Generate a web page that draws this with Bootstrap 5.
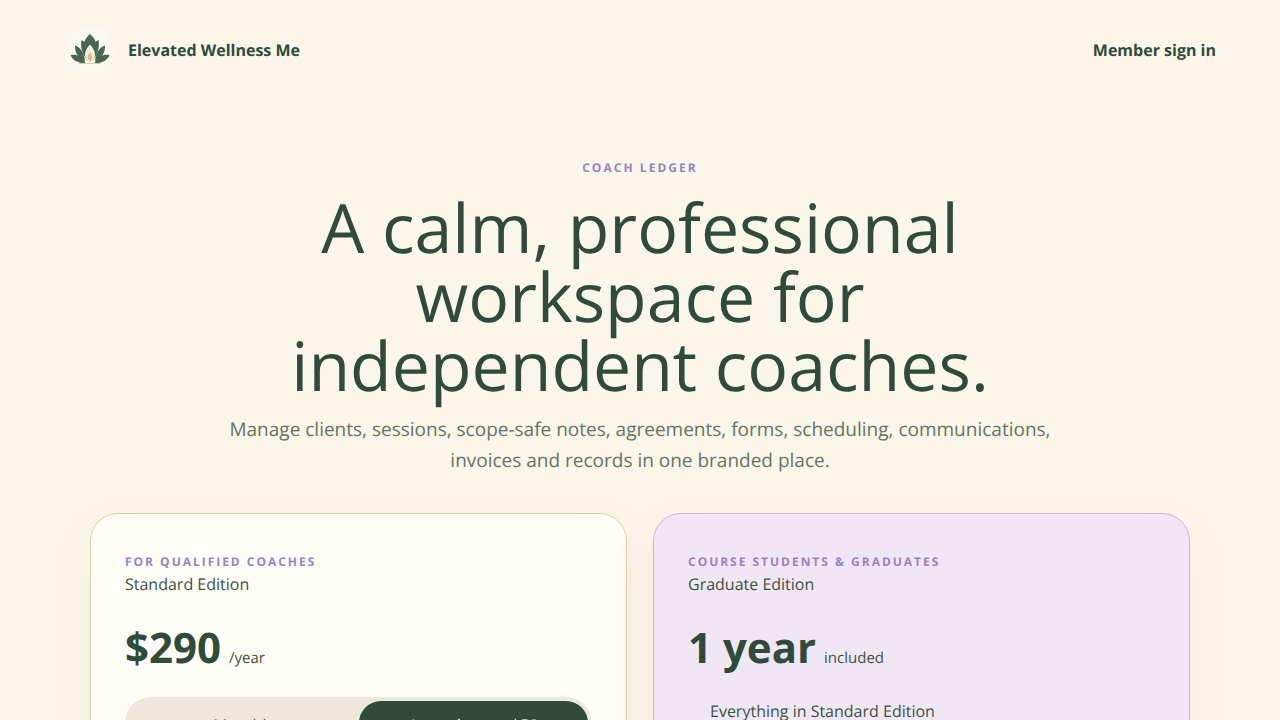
<!DOCTYPE html>
<html lang="en">
<head>
<meta charset="utf-8">
<title>Elevated Wellness Me</title>
<link href="https://cdn.jsdelivr.net/npm/bootstrap@5.3.0/dist/css/bootstrap.min.css" rel="stylesheet">
<style>
html,body{height:720px;overflow:hidden}
body{background:#faf6ea;font-family:"Open Sans",sans-serif;color:#304b3a;text-rendering:geometricPrecision}
.topbar{padding:24px 64px 0 64px;height:76px}
.logo-mark{width:52px;height:52px;margin-right:12px}
.brand-name{font-size:16px;font-weight:700;color:#304b3a;text-decoration:none}
.signin{font-size:16px;font-weight:700;color:#304b3a;text-decoration:none}
.hero{padding-top:84px;text-align:center}
.kicker{font-size:12px;font-weight:700;letter-spacing:.17em;color:#9d80c6;line-height:16px;margin:0}
.headline{font-size:68px;font-weight:400;line-height:69px;color:#304b3a;margin:16px auto 0;width:760px}
.lede{font-size:19px;line-height:31px;color:#667465;margin:0 auto;width:840px;padding-top:15px}
.plans{display:grid;grid-template-columns:537px 537px;gap:26px;justify-content:center;margin-top:37px}
.plan{border-radius:28px;padding:34px;height:420px;box-shadow:0 16px 48px rgba(70,70,50,.05)}
.plan-std{background:#fffdf8;border:1px solid #dccfa8}
.plan-grad{background:#f0e7f5;border:1px solid #c4b8d4}
.plan-tag{font-size:12px;font-weight:700;letter-spacing:.165em;color:#9d80c6;line-height:26px;margin-top:1px}
.plan-name{font-size:16px;line-height:22px;margin-top:-2px;color:#3f5144}
.price{margin-top:23px;line-height:60px;height:60px;font-size:42px;font-weight:700;color:#304b3a}
.price small{font-size:15px;font-weight:400;color:#3f5144;margin-left:8px}
.billing{margin-top:19px;background:#eee8dc;border-radius:26px;padding:4px;display:grid;grid-template-columns:1fr 1fr;font-size:16px;text-align:center;width:467px}
.bill-opt{line-height:30px;padding:9px 0 11px;color:#3f5144;border-radius:22px}
.bill-on{background:#304b3a;color:#fffdf8}
.feat{margin-top:21px;padding-left:22px;font-size:16px;line-height:24px;color:#3f5144;list-style:none}
</style>
</head>
<body>
<header class="topbar d-flex align-items-center justify-content-between">
  <a class="d-flex align-items-center brand-name" href="#">
    <svg class="logo-mark" viewBox="0 0 52 52" aria-hidden="true">
      <circle cx="26" cy="26" r="24" fill="#fbf8ef"/>
      <path d="M6.500 31c6-1 11 1 15 8-7 .5-13-2.500-15-8zM45.500 31c-6-1-11 1-15 8 7 .5 13-2.500 15-8z" fill="#4a6655"/>
      <path d="M11 21.500c5 1.500 9 6.500 10 15.500-6-2.500-10.500-8-10-15.500zM41 21.500c-5 1.500-9 6.500-10 15.500 6-2.500 10.500-8 10-15.500z" fill="#4a6655"/>
      <path d="M17.500 16c4 2 6.500 6.500 6.500 13 0 3 0 5.500-.5 7.500-4.500-5-7.500-12.500-6-20.500zM34.500 16c-4 2-6.500 6.500-6.500 13 0 3 0 5.500.5 7.500 4.500-5 7.500-12.500 6-20.500z" fill="#4a6655"/>
      <path d="M26 10c4.500 4 7 9 7 14-2.500 1-5 3-7 6-2-3-4.500-5-7-6 0-5 2.500-10 7-14z" fill="#4a6655"/>
      <path d="M26 20.500c3.200 3 5 6.800 5 10.500 0 3-2.300 6-5 7.500-2.700-1.500-5-4.500-5-7.500 0-3.700 1.800-7.500 5-10.500z" fill="#f6eedb"/>
      <path d="M26 28c1.500 2 2.200 3.500 2.200 5.200s-1 3-2.200 4.200c-1.200-1.200-2.200-2.500-2.200-4.200s.7-3.200 2.200-5.200z" fill="#dcc083"/>
      <path d="M15 39.500h22" stroke="#dccb9c" stroke-width="1"/>
    </svg>
    <span>Elevated Wellness Me</span>
  </a>
  <a class="signin" href="#">Member sign in</a>
</header>
<main>
  <section class="hero">
    <p class="kicker">COACH LEDGER</p>
    <h1 class="headline">A calm, professional workspace for independent coaches.</h1>
    <p class="lede">Manage clients, sessions, scope-safe notes, agreements, forms, scheduling, communications, invoices and records in one branded place.</p>
  </section>
  <section class="plans">
    <article class="plan plan-std">
      <div class="plan-tag">FOR QUALIFIED COACHES</div>
      <div class="plan-name">Standard Edition</div>
      <div class="price">$290<small>/year</small></div>
      <div class="billing">
        <div class="bill-opt">Monthly</div>
        <div class="bill-opt bill-on">Annual · save $58</div>
      </div>
    </article>
    <article class="plan plan-grad">
      <div class="plan-tag">COURSE STUDENTS &amp; GRADUATES</div>
      <div class="plan-name">Graduate Edition</div>
      <div class="price">1 year<small>included</small></div>
      <ul class="feat"><li>Everything in Standard Edition</li></ul>
    </article>
  </section>
</main>
<script src="https://cdn.jsdelivr.net/npm/bootstrap@5.3.0/dist/js/bootstrap.bundle.min.js"></script>
</body>
</html>
